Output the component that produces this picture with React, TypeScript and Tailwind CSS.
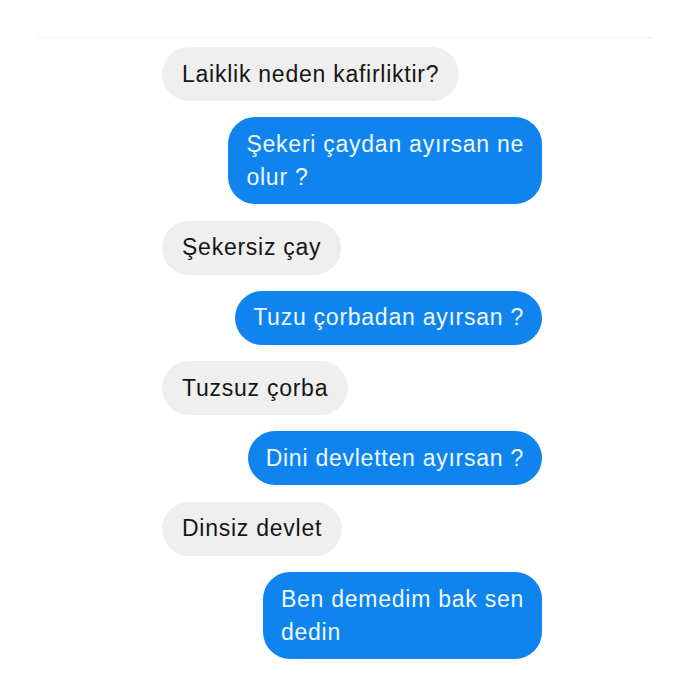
const messages = [
  { id: 1, me: false, lines: ["Laiklik neden kafirliktir?"] },
  { id: 2, me: true, lines: ["Şekeri çaydan ayırsan ne", "olur ?"] },
  { id: 3, me: false, lines: ["Şekersiz çay"] },
  { id: 4, me: true, lines: ["Tuzu çorbadan ayırsan ?"] },
  { id: 5, me: false, lines: ["Tuzsuz çorba"] },
  { id: 6, me: true, lines: ["Dini devletten ayırsan ?"] },
  { id: 7, me: false, lines: ["Dinsiz devlet"] },
  { id: 8, me: true, lines: ["Ben demedim bak sen", "dedin"] },
]

const App = () => {
  return (
    <div className="w-[690px] h-[690px] bg-white overflow-hidden font-['Liberation_Sans',Arial,sans-serif]">
      <div className="pt-[37px] px-[38px]">
        <hr className="border-0 border-t border-[#efefef]" />
      </div>
      <div className="flex flex-col gap-[16.3px] pt-[9px] ml-[162px] w-[380px]">
        {messages.map((m) => (
          <div
            key={m.id}
            className={
              m.me
                ? "self-end bg-[#0f84ef] text-[#eef8ff] rounded-[27px] px-[18px] py-[10.5px] text-[23px] leading-[33px] tracking-[0.75px] whitespace-nowrap"
                : "self-start bg-[#efefef] text-[#161616] rounded-[27px] px-[20px] py-[10.5px] text-[23px] leading-[33px] tracking-[0.75px] whitespace-nowrap"
            }
          >
            {m.lines.map((l, i) => (
              <div key={i}>{l}</div>
            ))}
          </div>
        ))}
      </div>
    </div>
  )
}

export default App
